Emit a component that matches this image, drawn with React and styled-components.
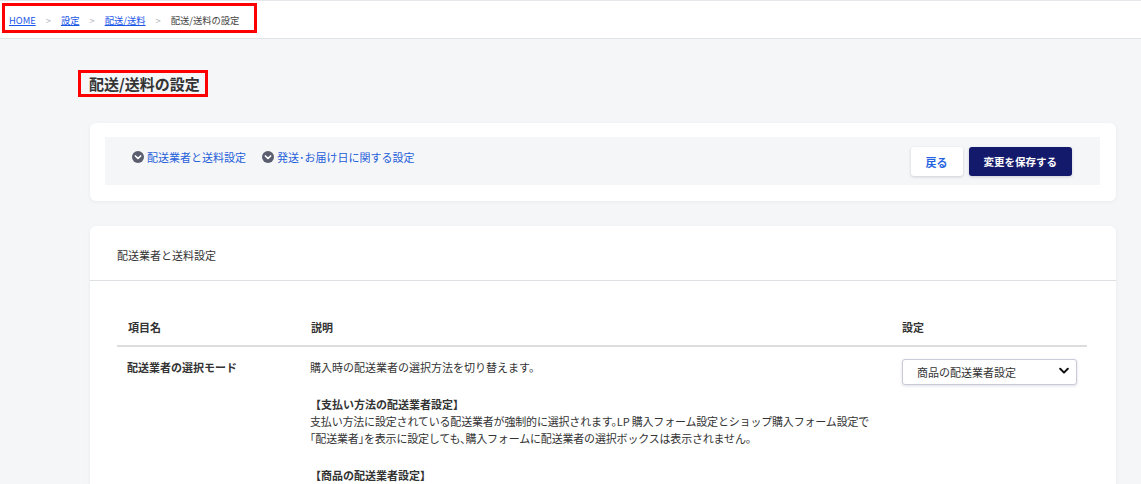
import styled, { createGlobalStyle } from "styled-components";

const GlobalStyle = createGlobalStyle`
  html, body {
    margin: 0;
    padding: 0;
    background: #f5f6f8;
    font-family: "Noto Sans CJK JP", "Noto Sans", sans-serif;
    color: #333;
  }
  * { box-sizing: border-box; }
`;

const TopBar = styled.header`
  height: 39px;
  background: #fff;
  border-top: 1px solid #e6e7ea;
  border-bottom: 1px solid #e1e3e7;
  padding: 2px 0 0 2px;
`;

const Crumbs = styled.nav`
  display: inline-flex;
  align-items: center;
  height: 30px;
  padding: 4px 15px 0 4px;
  border: 3px solid #f00;
  font-size: 9.3px;
  line-height: 14px;
`;

const CrumbLink = styled.a`
  color: #1a56e8;
  text-decoration: underline;
`;

const Sep = styled.span`
  color: #b9bcc4;
  margin: 0 10px;
`;

const CrumbCurrent = styled.span`
  color: #444;
`;

const Main = styled.main`
  padding: 31px 25px 0 90px;
`;

const TitleBox = styled.div`
  display: inline-block;
  margin-left: -12px;
  padding: 0 5px 0 8px;
  border: 3px solid #f00;
`;

const Title = styled.h1`
  margin: 0;
  font-size: 15px;
  line-height: 21px;
  font-weight: 700;
  color: #333;
`;

const Card = styled.section`
  background: #fff;
  border-radius: 6px;
  box-shadow: 0 1px 4px rgba(30, 40, 60, 0.05);
  margin-top: ${(p) => p.$mt}px;
`;

const Toolbar = styled.div`
  padding: 14px 16px 16px 15px;
`;

const ToolbarInner = styled.div`
  display: flex;
  justify-content: space-between;
  align-items: flex-start;
  background: #f5f6f8;
  padding: 10px 28px 9px 27px;
`;

const Anchors = styled.div`
  display: flex;
  gap: 16px;
`;

const Anchor = styled.a`
  display: flex;
  align-items: center;
  gap: 3px;
  height: 20px;
  font-size: 11px;
  color: #1f5fd8;
  text-decoration: none;
`;

const Buttons = styled.div`
  display: flex;
  gap: 6px;
`;

const Button = styled.button`
  height: 29px;
  padding: 0 15px;
  border: none;
  border-radius: 3px;
  font-family: inherit;
  font-size: ${(p) => (p.$primary ? 10.5 : 11)}px;
  font-weight: 700;
  background: ${(p) => (p.$primary ? "#13196b" : "#fff")};
  color: ${(p) => (p.$primary ? "#fff" : "#2464e0")};
  box-shadow: 0 1px 3px rgba(20, 30, 60, 0.18);
`;

const CardHeader = styled.div`
  height: 55px;
  display: flex;
  align-items: center;
  padding: 3px 27px 0;
  border-bottom: 1px solid #dedfe2;
  font-size: 11px;
  color: #333;
`;

const TableWrap = styled.div`
  padding: 28px 29px 0 27px;
`;

const Row = styled.div`
  display: grid;
  grid-template-columns: 183px 1fr 196px;
  border-bottom: ${(p) => (p.$head ? "2px solid #dcdddf" : "none")};
`;

const Cell = styled.div`
  padding: ${(p) => (p.$head ? "8px 11px" : "12px 10px")};
  font-size: 11px;
  line-height: ${(p) => (p.$head ? "20px" : "17px")};
  font-weight: ${(p) => (p.$bold ? 700 : 400)};
  color: #333;
`;

const SettingCell = styled.div`
  padding: 11px 10px 0 11px;
`;

const Para = styled.p`
  margin: 0 0 20px;
`;

const Strong = styled.span`
  display: block;
  font-weight: 700;
`;

const Line = styled.span`
  display: block;
  white-space: nowrap;
  font-feature-settings: "halt";
  letter-spacing: -0.18px;
`;

const SelectWrap = styled.div`
  position: relative;
`;

const Select = styled.select`
  appearance: none;
  width: 100%;
  height: 26px;
  padding: 0 30px 0 14px;
  border: 1px solid #c9cbd8;
  border-radius: 3px;
  background: #fff;
  font-family: inherit;
  font-size: 11px;
  color: #333;
  box-shadow: 0 1px 3px rgba(20, 30, 60, 0.15);
`;

const Chevron = styled.svg`
  position: absolute;
  right: 8px;
  top: 9px;
  pointer-events: none;
`;

const CircleDown = () => (
  <svg width="12" height="12" viewBox="0 0 12 12">
    <circle cx="6" cy="6" r="6" fill="#5b5e6e" />
    <path d="M3.4 5 L6 7.5 L8.6 5" stroke="#fff" strokeWidth="1.7" fill="none" strokeLinecap="round" strokeLinejoin="round" />
  </svg>
);

export default function App() {
  return (
    <>
      <GlobalStyle />
      <TopBar>
        <Crumbs>
          <CrumbLink href="#">HOME</CrumbLink>
          <Sep>&gt;</Sep>
          <CrumbLink href="#">設定</CrumbLink>
          <Sep>&gt;</Sep>
          <CrumbLink href="#">配送/送料</CrumbLink>
          <Sep>&gt;</Sep>
          <CrumbCurrent>配送/送料の設定</CrumbCurrent>
        </Crumbs>
      </TopBar>
      <Main>
        <TitleBox>
          <Title>配送/送料の設定</Title>
        </TitleBox>
        <Card $mt={26}>
          <Toolbar>
            <ToolbarInner>
              <Anchors>
                <Anchor href="#">
                  <CircleDown />
                  配送業者と送料設定
                </Anchor>
                <Anchor href="#">
                  <CircleDown />
                  発送･お届け日に関する設定
                </Anchor>
              </Anchors>
              <Buttons>
                <Button>戻る</Button>
                <Button $primary>変更を保存する</Button>
              </Buttons>
            </ToolbarInner>
          </Toolbar>
        </Card>
        <Card $mt={25}>
          <CardHeader>配送業者と送料設定</CardHeader>
          <TableWrap>
            <Row $head>
              <Cell $head $bold>項目名</Cell>
              <Cell $head $bold>説明</Cell>
              <Cell $head $bold>設定</Cell>
            </Row>
            <Row>
              <Cell $bold>配送業者の選択モード</Cell>
              <Cell>
                <Para>購入時の配送業者の選択方法を切り替えます。</Para>
                <Para>
                  <Strong>【支払い方法の配送業者設定】</Strong>
                  <Line>支払い方法に設定されている配送業者が強制的に選択されます。LP 購入フォーム設定とショップ購入フォーム設定で</Line>
                  <Line>「配送業者」を表示に設定しても、購入フォームに配送業者の選択ボックスは表示されません。</Line>
                </Para>
                <Para>
                  <Strong>【商品の配送業者設定】</Strong>
                  商品に設定されている配送業者が選択されます。
                </Para>
              </Cell>
              <SettingCell>
                <SelectWrap>
                  <Select defaultValue="item">
                    <option value="item">商品の配送業者設定</option>
                    <option value="payment">支払い方法の配送業者設定</option>
                  </Select>
                  <Chevron width="10" height="8" viewBox="0 0 10 8">
                    <path d="M1.2 1.8 L5 5.6 L8.8 1.8" stroke="#111" strokeWidth="2" fill="none" strokeLinecap="round" strokeLinejoin="round" />
                  </Chevron>
                </SelectWrap>
              </SettingCell>
            </Row>
          </TableWrap>
        </Card>
      </Main>
    </>
  );
}
